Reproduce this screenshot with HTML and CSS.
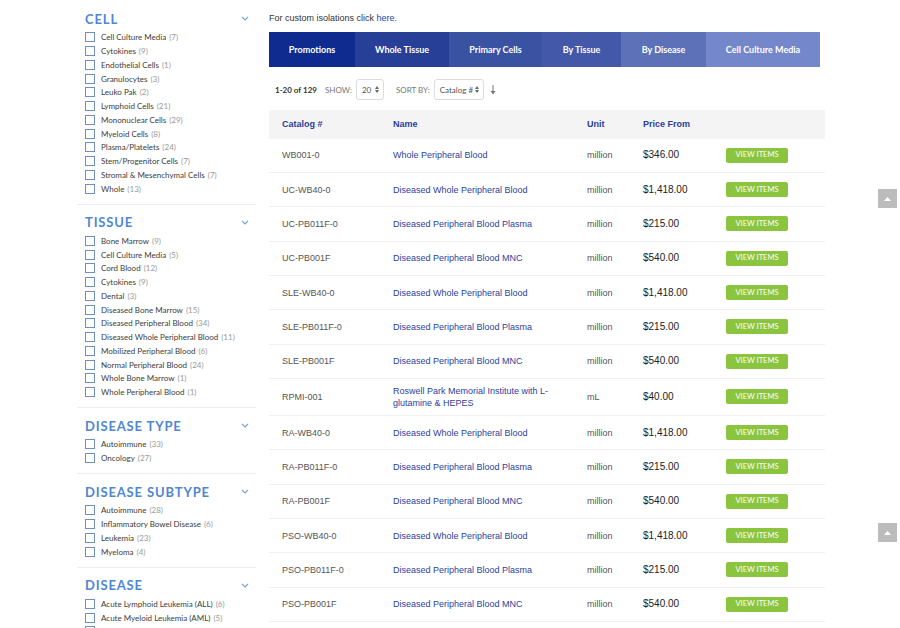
FILE: index.html
```html
<!DOCTYPE html>
<html>
<head>
<meta charset="utf-8">
<link rel="stylesheet" href="styles.css">
</head>
<body>
<div class="page">
  <aside class="sidebar">
    <section class="facet">
      <div class="facet-head"><span>CELL</span><svg class="chev" width="8" height="5" viewBox="0 0 8 5"><polyline points="1,1 4,4 7,1" fill="none" stroke="#7aa3dc" stroke-width="1.2"/></svg></div>
      <ul>
        <li><i class="cb"></i>Cell Culture Media <em>(7)</em></li>
        <li><i class="cb"></i>Cytokines <em>(9)</em></li>
        <li><i class="cb"></i>Endothelial Cells <em>(1)</em></li>
        <li><i class="cb"></i>Granulocytes <em>(3)</em></li>
        <li><i class="cb"></i>Leuko Pak <em>(2)</em></li>
        <li><i class="cb"></i>Lymphoid Cells <em>(21)</em></li>
        <li><i class="cb"></i>Mononuclear Cells <em>(29)</em></li>
        <li><i class="cb"></i>Myeloid Cells <em>(8)</em></li>
        <li><i class="cb"></i>Plasma/Platelets <em>(24)</em></li>
        <li><i class="cb"></i>Stem/Progenitor Cells <em>(7)</em></li>
        <li><i class="cb"></i>Stromal &amp; Mesenchymal Cells <em>(7)</em></li>
        <li><i class="cb"></i>Whole <em>(13)</em></li>
      </ul>
    </section>
    <section class="facet">
      <div class="facet-head"><span>TISSUE</span><svg class="chev" width="8" height="5" viewBox="0 0 8 5"><polyline points="1,1 4,4 7,1" fill="none" stroke="#7aa3dc" stroke-width="1.2"/></svg></div>
      <ul>
        <li><i class="cb"></i>Bone Marrow <em>(9)</em></li>
        <li><i class="cb"></i>Cell Culture Media <em>(5)</em></li>
        <li><i class="cb"></i>Cord Blood <em>(12)</em></li>
        <li><i class="cb"></i>Cytokines <em>(9)</em></li>
        <li><i class="cb"></i>Dental <em>(3)</em></li>
        <li><i class="cb"></i>Diseased Bone Marrow <em>(15)</em></li>
        <li><i class="cb"></i>Diseased Peripheral Blood <em>(34)</em></li>
        <li><i class="cb"></i>Diseased Whole Peripheral Blood <em>(11)</em></li>
        <li><i class="cb"></i>Mobilized Peripheral Blood <em>(6)</em></li>
        <li><i class="cb"></i>Normal Peripheral Blood <em>(24)</em></li>
        <li><i class="cb"></i>Whole Bone Marrow <em>(1)</em></li>
        <li><i class="cb"></i>Whole Peripheral Blood <em>(1)</em></li>
      </ul>
    </section>
    <section class="facet">
      <div class="facet-head"><span>DISEASE TYPE</span><svg class="chev" width="8" height="5" viewBox="0 0 8 5"><polyline points="1,1 4,4 7,1" fill="none" stroke="#7aa3dc" stroke-width="1.2"/></svg></div>
      <ul>
        <li><i class="cb"></i>Autoimmune <em>(33)</em></li>
        <li><i class="cb"></i>Oncology <em>(27)</em></li>
      </ul>
    </section>
    <section class="facet">
      <div class="facet-head"><span>DISEASE SUBTYPE</span><svg class="chev" width="8" height="5" viewBox="0 0 8 5"><polyline points="1,1 4,4 7,1" fill="none" stroke="#7aa3dc" stroke-width="1.2"/></svg></div>
      <ul>
        <li><i class="cb"></i>Autoimmune <em>(28)</em></li>
        <li><i class="cb"></i>Inflammatory Bowel Disease <em>(6)</em></li>
        <li><i class="cb"></i>Leukemia <em>(23)</em></li>
        <li><i class="cb"></i>Myeloma <em>(4)</em></li>
      </ul>
    </section>
    <section class="facet">
      <div class="facet-head"><span>DISEASE</span><svg class="chev" width="8" height="5" viewBox="0 0 8 5"><polyline points="1,1 4,4 7,1" fill="none" stroke="#7aa3dc" stroke-width="1.2"/></svg></div>
      <ul>
        <li><i class="cb"></i>Acute Lymphoid Leukemia (ALL) <em>(6)</em></li>
        <li><i class="cb"></i>Acute Myeloid Leukemia (AML) <em>(5)</em></li>
        <li><i class="cb"></i></li>
      </ul>
    </section>
  </aside>

  <main class="main">
    <p class="custom">For custom isolations click <a href="#">here.</a></p>
    <nav class="tabs">
      <a class="tab t1">Promotions</a>
      <a class="tab t2">Whole Tissue</a>
      <a class="tab t3">Primary Cells</a>
      <a class="tab t4">By Tissue</a>
      <a class="tab t5">By Disease</a>
      <a class="tab t6">Cell Culture Media</a>
    </nav>
    <div class="toolbar">
      <b class="count">1-20 of 129</b>
      <span class="lbl">SHOW:</span>
      <span class="sel sel-show">20 <svg width="4" height="7" viewBox="0 0 4 7"><polygon points="0,3 2,0 4,3" fill="#666"/><polygon points="0,4 2,7 4,4" fill="#666"/></svg></span>
      <span class="lbl lbl-sort">SORT BY:</span>
      <span class="sel sel-sort">Catalog # <svg width="4" height="7" viewBox="0 0 4 7"><polygon points="0,3 2,0 4,3" fill="#666"/><polygon points="0,4 2,7 4,4" fill="#666"/></svg></span>
      <svg class="sortdir" width="6" height="10" viewBox="0 0 6 10"><line x1="3" y1="0" x2="3" y2="8" stroke="#777" stroke-width="1"/><polygon points="0.5,6 3,9.5 5.5,6" fill="#777"/></svg>
    </div>

    <div class="grid">
      <div class="row head"><span>Catalog #</span><span>Name</span><span>Unit</span><span>Price From</span><span></span></div>
      <div class="row"><span class="cat">WB001-0</span><a class="name">Whole Peripheral Blood</a><span class="unit">million</span><span class="price">$346.00</span><a class="btn">VIEW ITEMS</a></div>
      <div class="row"><span class="cat">UC-WB40-0</span><a class="name">Diseased Whole Peripheral Blood</a><span class="unit">million</span><span class="price">$1,418.00</span><a class="btn">VIEW ITEMS</a></div>
      <div class="row"><span class="cat">UC-PB011F-0</span><a class="name">Diseased Peripheral Blood Plasma</a><span class="unit">million</span><span class="price">$215.00</span><a class="btn">VIEW ITEMS</a></div>
      <div class="row"><span class="cat">UC-PB001F</span><a class="name">Diseased Peripheral Blood MNC</a><span class="unit">million</span><span class="price">$540.00</span><a class="btn">VIEW ITEMS</a></div>
      <div class="row"><span class="cat">SLE-WB40-0</span><a class="name">Diseased Whole Peripheral Blood</a><span class="unit">million</span><span class="price">$1,418.00</span><a class="btn">VIEW ITEMS</a></div>
      <div class="row"><span class="cat">SLE-PB011F-0</span><a class="name">Diseased Peripheral Blood Plasma</a><span class="unit">million</span><span class="price">$215.00</span><a class="btn">VIEW ITEMS</a></div>
      <div class="row"><span class="cat">SLE-PB001F</span><a class="name">Diseased Peripheral Blood MNC</a><span class="unit">million</span><span class="price">$540.00</span><a class="btn">VIEW ITEMS</a></div>
      <div class="row"><span class="cat">RPMI-001</span><a class="name">Roswell Park Memorial Institute with L-glutamine &amp; HEPES</a><span class="unit">mL</span><span class="price">$40.00</span><a class="btn">VIEW ITEMS</a></div>
      <div class="row"><span class="cat">RA-WB40-0</span><a class="name">Diseased Whole Peripheral Blood</a><span class="unit">million</span><span class="price">$1,418.00</span><a class="btn">VIEW ITEMS</a></div>
      <div class="row"><span class="cat">RA-PB011F-0</span><a class="name">Diseased Peripheral Blood Plasma</a><span class="unit">million</span><span class="price">$215.00</span><a class="btn">VIEW ITEMS</a></div>
      <div class="row"><span class="cat">RA-PB001F</span><a class="name">Diseased Peripheral Blood MNC</a><span class="unit">million</span><span class="price">$540.00</span><a class="btn">VIEW ITEMS</a></div>
      <div class="row"><span class="cat">PSO-WB40-0</span><a class="name">Diseased Whole Peripheral Blood</a><span class="unit">million</span><span class="price">$1,418.00</span><a class="btn">VIEW ITEMS</a></div>
      <div class="row"><span class="cat">PSO-PB011F-0</span><a class="name">Diseased Peripheral Blood Plasma</a><span class="unit">million</span><span class="price">$215.00</span><a class="btn">VIEW ITEMS</a></div>
      <div class="row"><span class="cat">PSO-PB001F</span><a class="name">Diseased Peripheral Blood MNC</a><span class="unit">million</span><span class="price">$540.00</span><a class="btn">VIEW ITEMS</a></div>
    </div>
  </main>
</div>
<a class="totop totop-1"><svg width="7" height="4" viewBox="0 0 7 4"><polygon points="0,4 3.5,0 7,4" fill="#fff"/></svg></a>
<a class="totop totop-2"><svg width="7" height="4" viewBox="0 0 7 4"><polygon points="0,4 3.5,0 7,4" fill="#fff"/></svg></a>
</body>
</html>
```

FILE: styles.css
```css
* { box-sizing: border-box; }
html, body { margin: 0; padding: 0; background: #fff; }
body { width: 900px; height: 628px; overflow: hidden; font-family: "Liberation Sans", Arial, sans-serif; }
.page { display: flex; padding-left: 77px; gap: 13px; }

.sidebar { width: 179px; flex: none; padding-top: 1px; font-family: Lato, "Liberation Sans", sans-serif; }
.facet { padding: 10.5px 0 8px; border-bottom: 1px solid #eeeeee; }
.facet-head { display: flex; align-items: center; justify-content: space-between; height: 14px; padding: 0 7px 0 8px; margin-bottom: 5px; }
.facet-head span { font-size: 13px; font-weight: 700; color: #5087d0; letter-spacing: 0.85px; }
.chev { display: block; }
.facet ul { list-style: none; margin: 0; padding: 0 0 0 8px; }
.facet li { display: flex; align-items: center; height: 13.75px; font-size: 8px; color: #3c3c3c; white-space: nowrap; }
.facet li em { font-style: normal; color: #9a9a9a; margin-left: 3px; }
.cb { width: 10px; height: 10px; border: 1px solid #6f8fbf; margin-right: 6px; flex: none; }

.main { width: 556px; flex: none; padding-top: 12px; }
.custom { margin: 0 0 8px; font-size: 9px; line-height: 12px; color: #333; }
.custom a { color: #2c3fa0; text-decoration: none; }

.tabs { display: flex; width: 551px; height: 35px; }
.tab { display: flex; align-items: center; justify-content: center; color: #fff; font-family: Lato, "Liberation Sans", sans-serif; font-weight: 700; font-size: 9px; }
.t1 { width: 86px; background: #0f2b8f; }
.t2 { width: 94px; background: #273f97; }
.t3 { width: 93px; background: #3a52a2; }
.t4 { width: 79px; background: #4358a8; }
.t5 { width: 85px; background: #5d71b9; }
.t6 { flex: 1; background: #7487cb; }

.toolbar { display: flex; align-items: center; height: 21px; margin: 12px 0 10px; padding-left: 6px; font-family: Lato, "Liberation Sans", sans-serif; font-size: 8px; color: #666; white-space: nowrap; }
.count { color: #333; font-weight: 700; margin-right: 8px; }
.lbl { color: #777; margin-right: 4px; }
.lbl-sort { margin-left: 12px; }
.sel { display: flex; align-items: center; justify-content: space-between; height: 21px; border: 1px solid #dcdcdc; border-radius: 3px; padding: 0 4px 0 5px; color: #555; white-space: nowrap; }
.sel-show { width: 28px; }
.sel-sort { width: 50px; }
.sortdir { margin-left: 6px; }

.grid { width: 556px; }
.row { display: grid; grid-template-columns: 124px 194px 56px 83px 99px; align-items: center; min-height: 34.35px; padding: 6px 0; border-bottom: 1px solid #f0f0f0; font-size: 9px; line-height: 12px; }
.row > :first-child { padding-left: 13px; }
.row.head { background: #f4f4f4; min-height: 28.5px; border-bottom: none; font-weight: 700; color: #2b3d9b; }
.cat { color: #555; }
.name { color: #2b3f9e; padding-right: 14px; }
.unit { color: #555; }
.price { color: #222; font-size: 10px; }
.btn { display: flex; align-items: center; justify-content: center; width: 62px; height: 15px; border-radius: 2px; background: #8bc540; color: #fff; font-family: Lato, "Liberation Sans", sans-serif; font-size: 7.5px; }

.totop { position: fixed; left: 878px; width: 19px; height: 19px; background: #bcbcbc; display: flex; align-items: center; justify-content: center; }
.totop-1 { top: 189px; }
.totop-2 { top: 523px; }
```
